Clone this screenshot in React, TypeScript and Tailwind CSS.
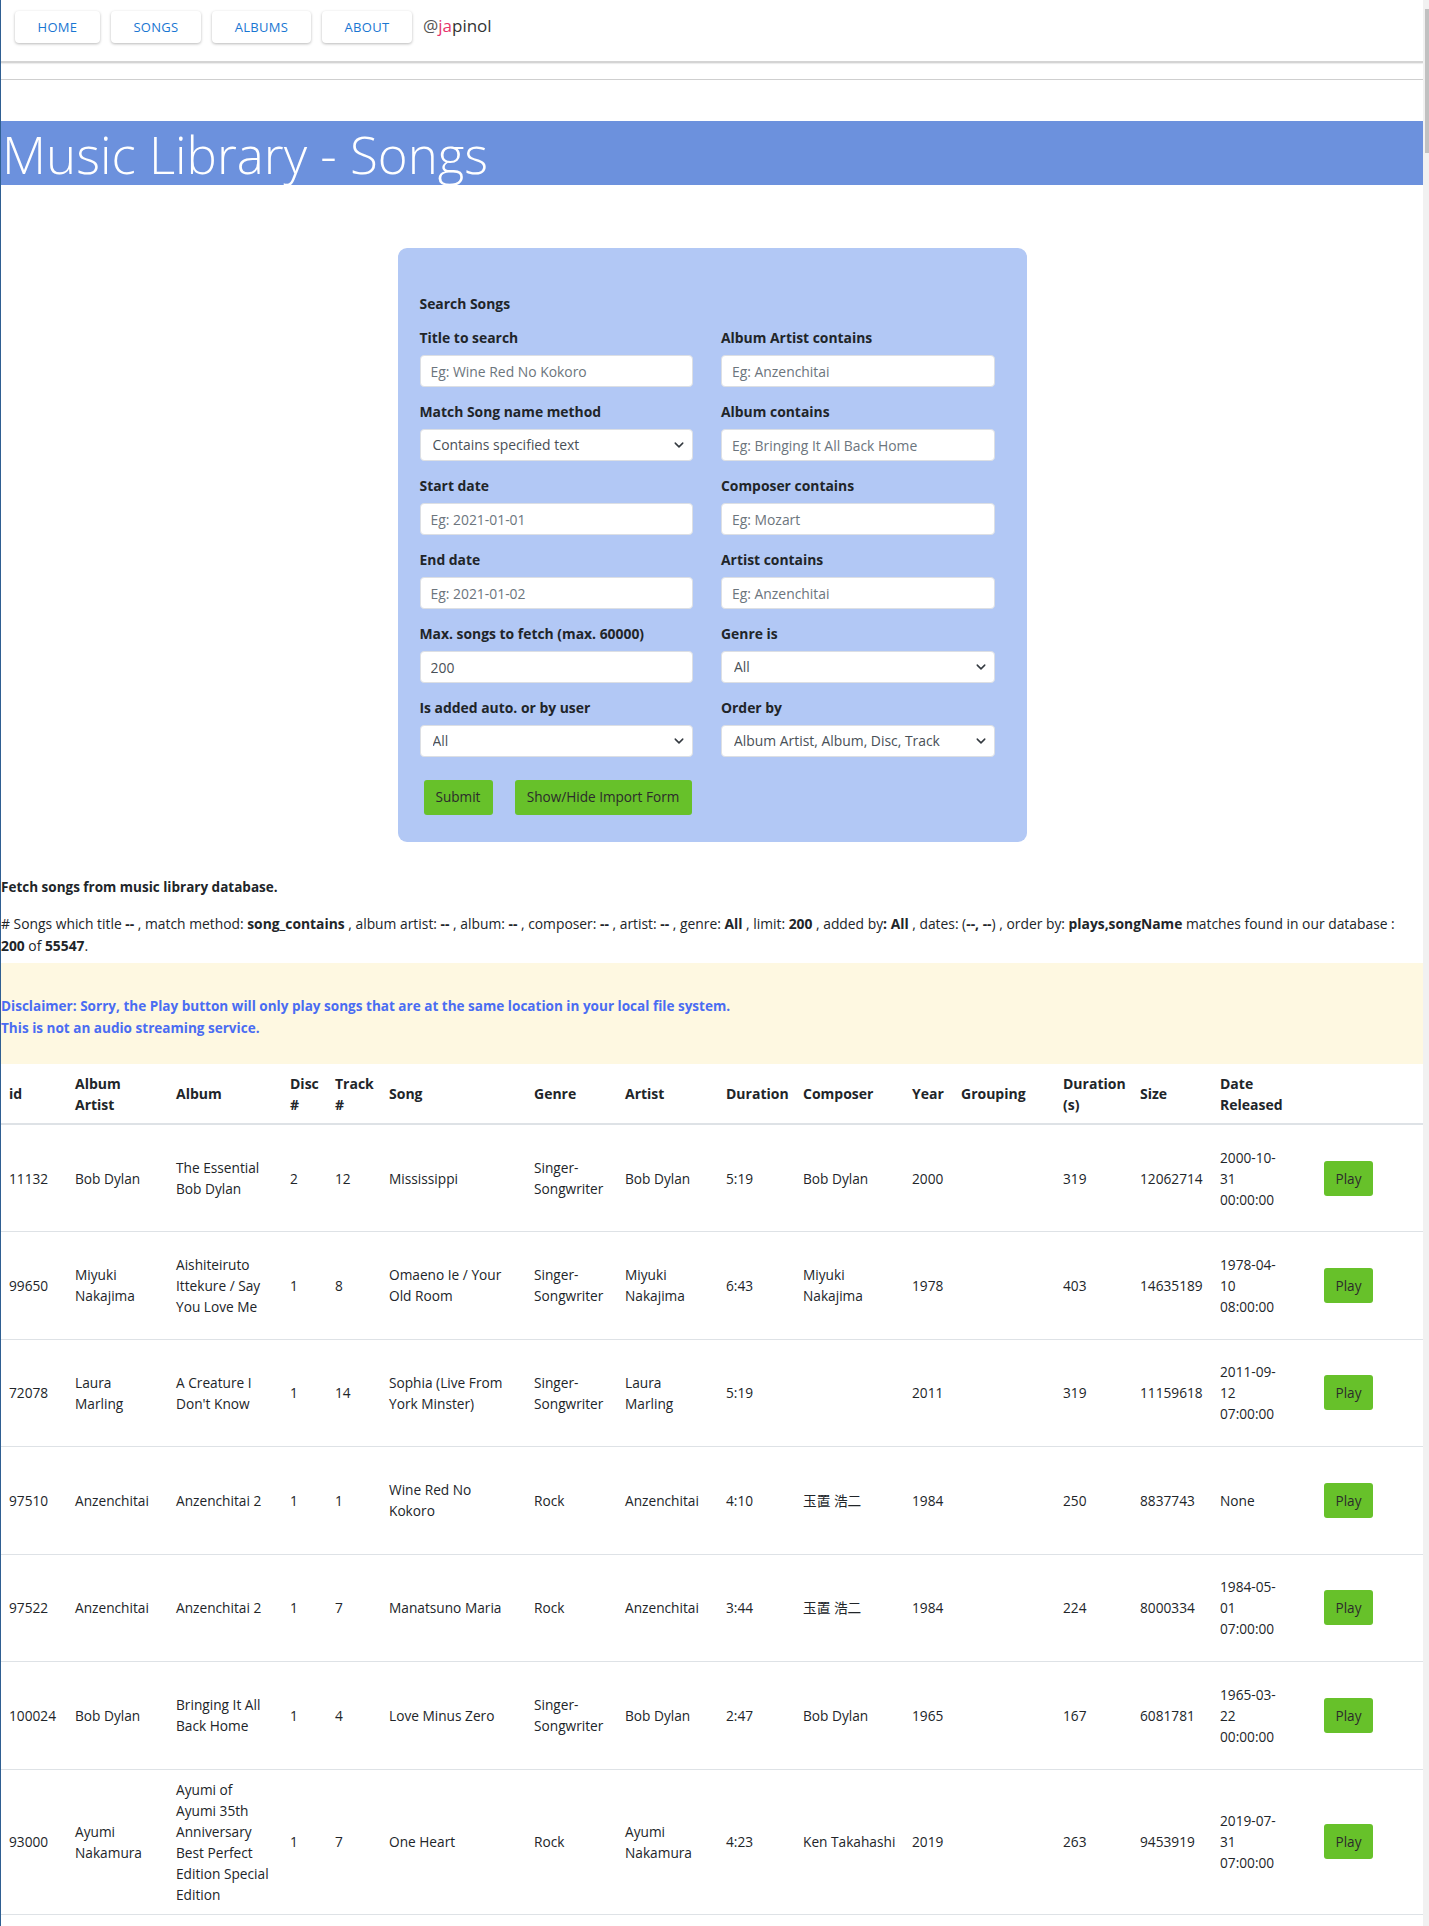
import React from "react";

type Cell = string | string[];

const rows: Cell[][] = [
  ["11132", "Bob Dylan", ["The Essential", "Bob Dylan"], "2", "12", "Mississippi", ["Singer-", "Songwriter"], "Bob Dylan", "5:19", "Bob Dylan", "2000", "", "319", "12062714", ["2000-10-", "31", "00:00:00"]],
  ["99650", ["Miyuki", "Nakajima"], ["Aishiteiruto", "Ittekure / Say", "You Love Me"], "1", "8", ["Omaeno Ie / Your", "Old Room"], ["Singer-", "Songwriter"], ["Miyuki", "Nakajima"], "6:43", ["Miyuki", "Nakajima"], "1978", "", "403", "14635189", ["1978-04-", "10", "08:00:00"]],
  ["72078", ["Laura", "Marling"], ["A Creature I", "Don't Know"], "1", "14", ["Sophia (Live From", "York Minster)"], ["Singer-", "Songwriter"], ["Laura", "Marling"], "5:19", "", "2011", "", "319", "11159618", ["2011-09-", "12", "07:00:00"]],
  ["97510", "Anzenchitai", "Anzenchitai 2", "1", "1", ["Wine Red No", "Kokoro"], "Rock", "Anzenchitai", "4:10", "玉置 浩二", "1984", "", "250", "8837743", "None"],
  ["97522", "Anzenchitai", "Anzenchitai 2", "1", "7", "Manatsuno Maria", "Rock", "Anzenchitai", "3:44", "玉置 浩二", "1984", "", "224", "8000334", ["1984-05-", "01", "07:00:00"]],
  ["100024", "Bob Dylan", ["Bringing It All", "Back Home"], "1", "4", "Love Minus Zero", ["Singer-", "Songwriter"], "Bob Dylan", "2:47", "Bob Dylan", "1965", "", "167", "6081781", ["1965-03-", "22", "00:00:00"]],
  ["93000", ["Ayumi", "Nakamura"], ["Ayumi of", "Ayumi 35th", "Anniversary", "Best Perfect", "Edition Special", "Edition"], "1", "7", "One Heart", "Rock", ["Ayumi", "Nakamura"], "4:23", "Ken Takahashi", "2019", "", "263", "9453919", ["2019-07-", "31", "07:00:00"]],
];

const headers: Cell[] = [
  "id", ["Album", "Artist"], "Album", ["Disc", "#"], ["Track", "#"], "Song", "Genre", "Artist", "Duration", "Composer", "Year", "Grouping", ["Duration", "(s)"], "Size", ["Date", "Released"], "",
];

const colWidths = [66, 101, 114, 45, 54, 145, 91, 101, 77, 109, 49, 102, 77, 80, 88];

function Lines({ c }: { c: Cell }) {
  if (Array.isArray(c)) {
    return (
      <>
        {c.map((l, i) => (
          <React.Fragment key={i}>
            {i > 0 && <br />}
            {l}
          </React.Fragment>
        ))}
      </>
    );
  }
  return <>{c}</>;
}

function Chevron() {
  return (
    <svg className="pointer-events-none absolute right-[9px] top-1/2 -translate-y-1/2" width="10" height="10" viewBox="0 0 16 16">
      <path d="M2 5l6 6 6-6" fill="none" stroke="#343a40" strokeWidth="2.4" strokeLinecap="round" strokeLinejoin="round" />
    </svg>
  );
}

function Field({ label, children }: { label: string; children: React.ReactNode }) {
  return (
    <div className="flex flex-col">
      <label className="mb-[7px] text-[13.9px] font-bold leading-[20px] text-[#212529]">{label}</label>
      {children}
    </div>
  );
}

function TextInput({ placeholder, value }: { placeholder: string; value?: string }) {
  return (
    <input
      className="h-[32px] w-full rounded-[4px] border border-[#dcdfe4] bg-white px-[10px] text-[13.9px] text-[#495057] placeholder:text-[#6c757d] outline-none"
      placeholder={placeholder}
      defaultValue={value}
    />
  );
}

function Select({ value }: { value: string }) {
  return (
    <div className="relative">
      <select className="h-[32px] w-full appearance-none rounded-[4px] border border-[#dcdfe4] bg-white pl-[12px] text-[13.9px] text-[#495057] outline-none" defaultValue={value}>
        <option>{value}</option>
      </select>
      <Chevron />
    </div>
  );
}

function NavButton({ label, w }: { label: string; w: string }) {
  return (
    <button className={`${w} h-[32px] rounded-[4px] bg-white pt-[1px] text-[13px] font-medium tracking-[0.3px] text-[#1976d2] shadow-[0_1px_3px_rgba(0,0,0,0.28)]`}>
      {label}
    </button>
  );
}

export default function App() {
  return (
    <div className="relative h-[1926px] overflow-hidden bg-white font-['Open_Sans','Noto_Sans_CJK_JP',sans-serif] text-[#212529]">
      <div className="flex h-full">
        <main className="w-[1423px] shrink-0 border-l border-[#2f5f92]">
          <nav className="flex h-[61px] items-start gap-[11px] pl-[14px] pt-[11px]">
            <NavButton label="HOME" w="w-[85px]" />
            <NavButton label="SONGS" w="w-[90px]" />
            <NavButton label="ALBUMS" w="w-[99px]" />
            <NavButton label="ABOUT" w="w-[90px]" />
            <span className="mt-[4px] text-[17px] leading-[22px] text-[#333]">
              <span className="text-[#555]">@</span>
              <span className="text-[#e6336d]">ja</span>pinol
            </span>
          </nav>
          <div className="h-[2px] bg-[#d4d4d4] shadow-[0_1px_1px_rgba(0,0,0,0.08)]" />
          <div className="mt-[16px] h-[1px] bg-[#cfcfcf]" />
          <div className="mt-[41px] h-[64px] bg-[#6c91dd]">
            <h1 className="pl-[1px] pt-[1px] text-[51px] font-light leading-[64px] text-white">Music Library - Songs</h1>
          </div>

          <div className="mx-auto mt-[63px] w-[629px] rounded-[9px] bg-[#b2c8f5] pb-[27px] pl-[22px] pr-[32px] pt-[46px]">
            <div className="mb-[14px] text-[13.9px] font-bold leading-[20px]">Search Songs</div>
            <div className="grid grid-cols-2 gap-x-[28px] gap-y-[15px]">
              <Field label="Title to search"><TextInput placeholder="Eg: Wine Red No Kokoro" /></Field>
              <Field label="Album Artist contains"><TextInput placeholder="Eg: Anzenchitai" /></Field>
              <Field label="Match Song name method"><Select value="Contains specified text" /></Field>
              <Field label="Album contains"><TextInput placeholder="Eg: Bringing It All Back Home" /></Field>
              <Field label="Start date"><TextInput placeholder="Eg: 2021-01-01" /></Field>
              <Field label="Composer contains"><TextInput placeholder="Eg: Mozart" /></Field>
              <Field label="End date"><TextInput placeholder="Eg: 2021-01-02" /></Field>
              <Field label="Artist contains"><TextInput placeholder="Eg: Anzenchitai" /></Field>
              <Field label="Max. songs to fetch (max. 60000)"><TextInput placeholder="" value="200" /></Field>
              <Field label="Genre is"><Select value="All" /></Field>
              <Field label="Is added auto. or by user"><Select value="All" /></Field>
              <Field label="Order by"><Select value="Album Artist, Album, Disc, Track" /></Field>
            </div>
            <div className="mt-[23px] flex gap-[22px] pl-[4px]">
              <button className="h-[35px] w-[69px] rounded-[3px] bg-[#67c12a] text-[13.6px] text-[#2b2b2b]">Submit</button>
              <button className="h-[35px] w-[177px] rounded-[3px] bg-[#67c12a] text-[13.6px] text-[#2b2b2b]">Show/Hide Import Form</button>
            </div>
          </div>

          <p className="mt-[35px] text-[13.5px] font-bold leading-[20px]">Fetch songs from music library database.</p>
          <p className="mt-[16px] text-[13.85px] leading-[22px] text-[#212529]">
            <span className="whitespace-nowrap">
              # Songs which title <b>--</b> , match method: <b>song_contains</b> , album artist: <b>--</b> , album: <b>--</b> , composer: <b>--</b> , artist: <b>--</b> , genre: <b>All</b> , limit: <b>200</b> , added by<b>: All</b> , dates: (<b>--, --</b>) , order by: <b>plays,songName</b> matches found in our database :
            </span>
            <br />
            <b>200</b> of <b>55547</b>.
          </p>

          <div className="mt-[6px] h-[101px] bg-[#fef8e1] pt-[32px] text-[13.55px] font-bold leading-[22px] text-[#4a6cf2]">
            <div>Disclaimer: Sorry, the Play button will only play songs that are at the same location in your local file system.</div>
            <div>This is not an audio streaming service.</div>
          </div>

          <table className="w-full table-fixed border-collapse text-[13.7px] leading-[21px]">
            <colgroup>
              {colWidths.map((w, i) => (
                <col key={i} style={{ width: w }} />
              ))}
              <col />
            </colgroup>
            <thead>
              <tr className="h-[60px] border-b-2 border-[#dee2e6]">
                {headers.map((h, i) => (
                  <th key={i} className="whitespace-nowrap px-[8px] text-left align-middle text-[14px] font-bold">
                    <Lines c={h} />
                  </th>
                ))}
              </tr>
            </thead>
            <tbody>
              {rows.map((r, ri) => (
                <tr key={ri} className="h-[107.5px] border-b border-[#dee2e6]">
                  {r.map((c, ci) => (
                    <td key={ci} className="whitespace-nowrap px-[8px] py-[9px] align-middle">
                      <Lines c={c} />
                    </td>
                  ))}
                  <td className="pl-[24px] align-middle">
                    <button className="h-[35px] w-[49px] rounded-[3px] bg-[#67c12a] text-[13.6px] text-[#2b2b2b]">Play</button>
                  </td>
                </tr>
              ))}
            </tbody>
          </table>
        </main>
        <div className="relative w-[6px] shrink-0 bg-[#f1f1f1]">
          <div className="absolute left-[2px] top-[9px] h-[144px] w-[4px] bg-[#c1c1c1]" />
        </div>
      </div>
    </div>
  );
}
